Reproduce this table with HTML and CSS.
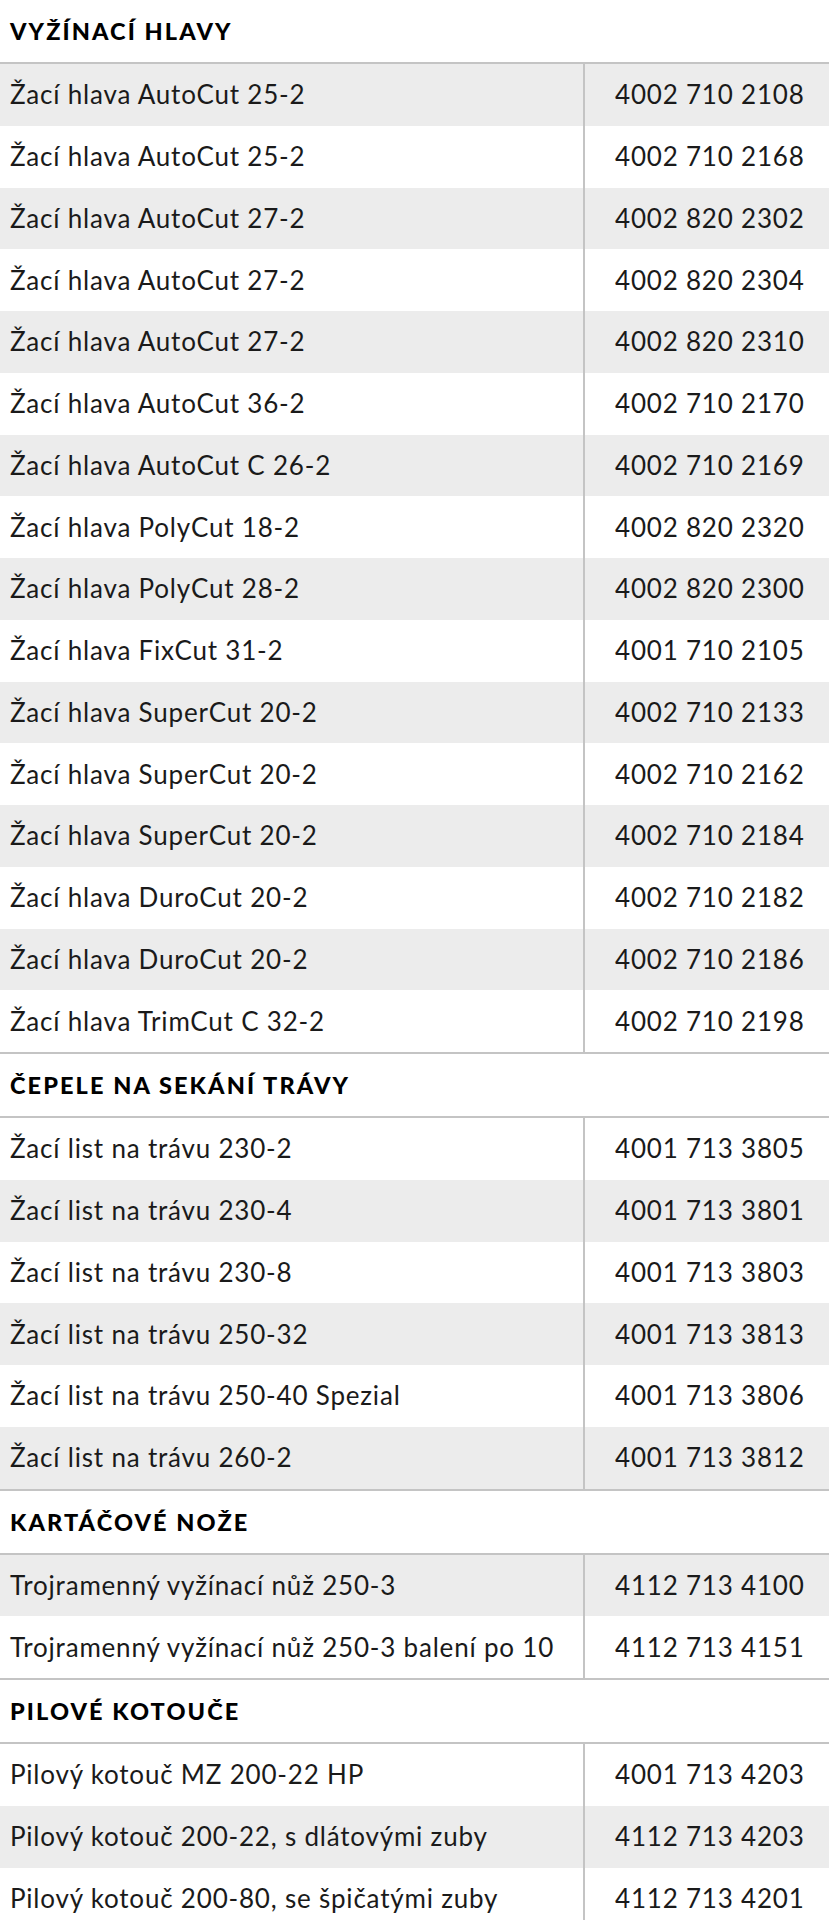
FILE: index.html
```html
<!DOCTYPE html>
<html lang="cs">
<head>
<meta charset="utf-8">
<title>Příslušenství</title>
<link rel="stylesheet" href="styles.css">
</head>
<body>
<table class="parts">
<colgroup><col class="c-name"><col class="c-num"></colgroup>
<tbody>
<tr class="head first"><th colspan="2">Vyžínací hlavy</th></tr>
<tr><td>Žací hlava AutoCut 25-2</td><td class="num">4002 710 2108</td></tr>
<tr><td>Žací hlava AutoCut 25-2</td><td class="num">4002 710 2168</td></tr>
<tr><td>Žací hlava AutoCut 27-2</td><td class="num">4002 820 2302</td></tr>
<tr><td>Žací hlava AutoCut 27-2</td><td class="num">4002 820 2304</td></tr>
<tr><td>Žací hlava AutoCut 27-2</td><td class="num">4002 820 2310</td></tr>
<tr><td>Žací hlava AutoCut 36-2</td><td class="num">4002 710 2170</td></tr>
<tr><td>Žací hlava AutoCut C 26-2</td><td class="num">4002 710 2169</td></tr>
<tr><td>Žací hlava PolyCut 18-2</td><td class="num">4002 820 2320</td></tr>
<tr><td>Žací hlava PolyCut 28-2</td><td class="num">4002 820 2300</td></tr>
<tr><td>Žací hlava FixCut 31-2</td><td class="num">4001 710 2105</td></tr>
<tr><td>Žací hlava SuperCut 20-2</td><td class="num">4002 710 2133</td></tr>
<tr><td>Žací hlava SuperCut 20-2</td><td class="num">4002 710 2162</td></tr>
<tr><td>Žací hlava SuperCut 20-2</td><td class="num">4002 710 2184</td></tr>
<tr><td>Žací hlava DuroCut 20-2</td><td class="num">4002 710 2182</td></tr>
<tr><td>Žací hlava DuroCut 20-2</td><td class="num">4002 710 2186</td></tr>
<tr><td>Žací hlava TrimCut C 32-2</td><td class="num">4002 710 2198</td></tr>
<tr class="head"><th colspan="2">Čepele na sekání trávy</th></tr>
<tr><td>Žací list na trávu 230-2</td><td class="num">4001 713 3805</td></tr>
<tr><td>Žací list na trávu 230-4</td><td class="num">4001 713 3801</td></tr>
<tr><td>Žací list na trávu 230-8</td><td class="num">4001 713 3803</td></tr>
<tr><td>Žací list na trávu 250-32</td><td class="num">4001 713 3813</td></tr>
<tr><td>Žací list na trávu 250-40 Spezial</td><td class="num">4001 713 3806</td></tr>
<tr><td>Žací list na trávu 260-2</td><td class="num">4001 713 3812</td></tr>
<tr class="head"><th colspan="2">Kartáčové nože</th></tr>
<tr><td>Trojramenný vyžínací nůž 250-3</td><td class="num">4112 713 4100</td></tr>
<tr><td>Trojramenný vyžínací nůž 250-3 balení po 10</td><td class="num">4112 713 4151</td></tr>
<tr class="head"><th colspan="2">Pilové kotouče</th></tr>
<tr><td>Pilový kotouč MZ 200-22 HP</td><td class="num">4001 713 4203</td></tr>
<tr><td>Pilový kotouč 200-22, s dlátovými zuby</td><td class="num">4112 713 4203</td></tr>
<tr><td>Pilový kotouč 200-80, se špičatými zuby</td><td class="num">4112 713 4201</td></tr>
</tbody>
</table>
</body>
</html>
```

FILE: styles.css
```css
html, body {
  margin: 0;
  padding: 0;
  background: #ffffff;
}

body {
  font-family: Lato, "Noto Sans", "DejaVu Sans", sans-serif;
  color: #1a1a1a;
}

.parts {
  width: 829px;
  border-collapse: collapse;
  table-layout: fixed;
}

.c-name {
  width: 584px;
}

.c-num {
  width: 245px;
}

.parts td {
  height: 61.75px;
  padding: 0 10px;
  font-size: 26px;
  font-weight: 400;
  letter-spacing: 0.8px;
  line-height: 1.2;
  vertical-align: middle;
  white-space: nowrap;
}

.parts tr:nth-child(even) td {
  background: #ececec;
}

.parts td.num {
  padding-left: 30px;
  border-left: 2px solid #c4c4c4;
}

.head th {
  height: 62px;
  padding: 0 10px;
  text-align: left;
  vertical-align: middle;
  font-size: 23.5px;
  font-weight: 900;
  letter-spacing: 2.1px;
  text-transform: uppercase;
  color: #000000;
  border-top: 2px solid #c4c4c4;
  border-bottom: 2px solid #c4c4c4;
}

.head.first th {
  border-top: none;
}
```
